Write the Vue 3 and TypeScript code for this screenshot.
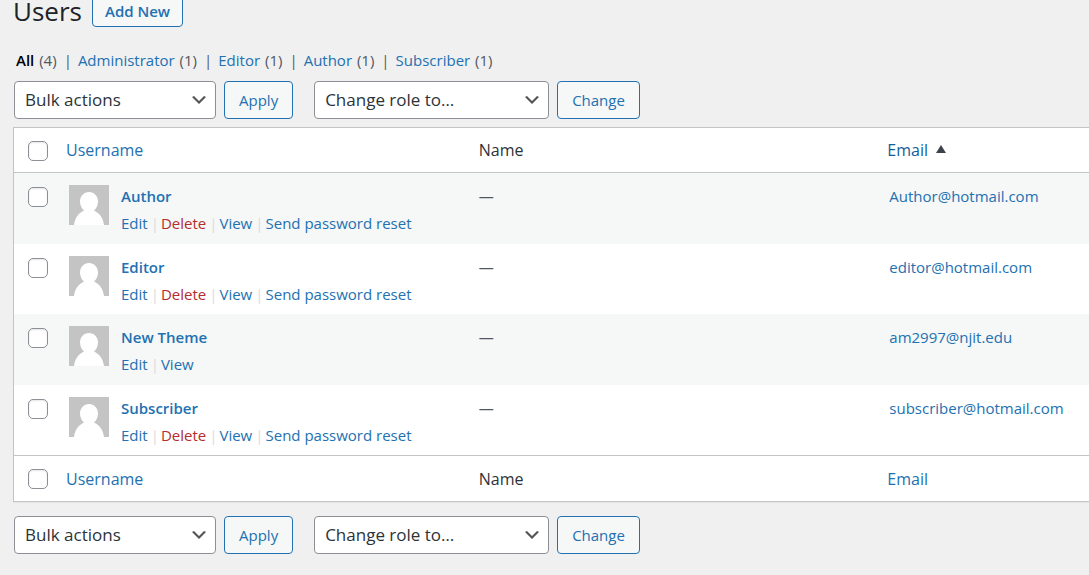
<script setup lang="ts">
import { ref } from 'vue'

interface User {
  id: number
  login: string
  email: string
  actions: string[]
}

const views = [
  { label: 'All', count: 4, current: true },
  { label: 'Administrator', count: 1, current: false },
  { label: 'Editor', count: 1, current: false },
  { label: 'Author', count: 1, current: false },
  { label: 'Subscriber', count: 1, current: false },
]

const allActions = ['Edit', 'Delete', 'View', 'Send password reset']

const users: User[] = [
  { id: 1, login: 'Author', email: 'Author@hotmail.com', actions: allActions },
  { id: 2, login: 'Editor', email: 'editor@hotmail.com', actions: allActions },
  { id: 3, login: 'New Theme', email: 'am2997@njit.edu', actions: ['Edit', 'View'] },
  { id: 4, login: 'Subscriber', email: 'subscriber@hotmail.com', actions: allActions },
]

const selected = ref<number[]>([])

function toggleAll(event: Event) {
  const box = event.target as HTMLInputElement
  selected.value = box.checked ? users.map((u) => u.id) : []
}
</script>

<template>
  <main class="page">
    <header class="heading">
      <h1>Users</h1>
      <button type="button" class="button add">Add New</button>
    </header>

    <ul class="views">
      <li v-for="view in views" :key="view.label">
        <a href="#" :class="{ current: view.current }">{{ view.label }} <span class="count">({{ view.count }})</span></a>
      </li>
    </ul>

    <template v-for="place in ['top', 'bottom']" :key="place">
      <form class="tablenav" :class="place" @submit.prevent>
        <div class="pick">
          <select class="bulk" aria-label="Select bulk action">
            <option>Bulk actions</option>
            <option>Delete</option>
          </select>
          <svg class="chevron" viewBox="0 0 20 20" aria-hidden="true"><path d="M5 6l5 5 5-5 2 1-7 7-7-7 2-1z" /></svg>
        </div>
        <button type="button" class="button apply">Apply</button>
        <div class="pick">
          <select class="role" aria-label="Change role to">
            <option>Change role to…</option>
            <option>Subscriber</option>
            <option>Author</option>
            <option>Editor</option>
            <option>Administrator</option>
          </select>
          <svg class="chevron" viewBox="0 0 20 20" aria-hidden="true"><path d="M5 6l5 5 5-5 2 1-7 7-7-7 2-1z" /></svg>
        </div>
        <button type="button" class="button">Change</button>
      </form>

      <table v-if="place === 'top'" class="users">
        <colgroup>
          <col class="col-check" />
          <col class="col-user" />
          <col class="col-name" />
          <col />
        </colgroup>
        <thead>
          <tr>
            <td class="check"><input type="checkbox" aria-label="Select all" @change="toggleAll" /></td>
            <th scope="col"><a href="#">Username</a></th>
            <th scope="col">Name</th>
            <th scope="col">
              <a href="#" class="sorted">Email<svg class="arrow" viewBox="0 0 10 8" aria-hidden="true"><path d="M5 0l5 8H0z" /></svg></a>
            </th>
          </tr>
        </thead>
        <tbody>
          <tr v-for="user in users" :key="user.id">
            <td class="check">
              <input v-model="selected" type="checkbox" :value="user.id" :aria-label="`Select ${user.login}`" />
            </td>
            <td>
              <div class="person">
                <svg class="avatar" viewBox="0 0 40 40" aria-hidden="true">
                  <rect width="40" height="40" fill="#c4c4c4" />
                  <path d="M5 40C6 32 10 28 15 25.500C12.500 23.500 11 20 11 16.500C11 11 15 7 20 7S29 11 29 16.500C29 20 27.500 23.500 25 25.500C30 28 34 32 35 40Z" fill="#fff" />
                </svg>
                <div>
                  <a href="#" class="login">{{ user.login }}</a>
                  <div class="actions">
                    <span v-for="action in user.actions" :key="action"><a href="#" :class="{ danger: action === 'Delete' }">{{ action }}</a></span>
                  </div>
                </div>
              </div>
            </td>
            <td class="name">—</td>
            <td class="email"><a href="#">{{ user.email }}</a></td>
          </tr>
        </tbody>
        <tfoot>
          <tr>
            <td class="check"><input type="checkbox" aria-label="Select all" @change="toggleAll" /></td>
            <th scope="col"><a href="#">Username</a></th>
            <th scope="col">Name</th>
            <th scope="col"><a href="#">Email</a></th>
          </tr>
        </tfoot>
      </table>
    </template>
  </main>
</template>

<style>
body {
  background: #f0f0f1;
  overflow: hidden;
}
</style>

<style scoped>
.page {
  box-sizing: border-box;
  padding-left: 13px;
  font: 15px/24px "Open Sans", "Noto Sans", sans-serif;
  color: #50575e;
}
.page * {
  box-sizing: border-box;
}
a {
  color: #2271b1;
  text-decoration: none;
}
.heading {
  display: flex;
  align-items: flex-end;
  gap: 10px;
  height: 37px;
  margin-top: -10px;
}
h1 {
  margin: 0;
  font-size: 26px;
  line-height: 32px;
  font-weight: 400;
  color: #1d2327;
}
.button {
  height: 38px;
  padding: 0 14px;
  border: 1px solid #2271b1;
  border-radius: 4px;
  background: #f6f7f7;
  color: #2271b1;
  font: inherit;
  cursor: pointer;
}
.button.add {
  height: 32px;
  padding: 0 12px;
  font-weight: 600;
}
.views {
  display: flex;
  margin: 21px 0 9px;
  padding: 0 0 0 3px;
  list-style: none;
}
.views li + li::before {
  content: "|";
  margin: 0 6px 0 7px;
}
.views .current {
  color: #000;
  font-weight: 600;
}
.count {
  margin-left: 1px;
  color: #50575e;
  font-weight: 400;
}
.tablenav {
  display: flex;
  gap: 8px;
  padding-left: 1px;
}
.tablenav.top {
  margin-bottom: 8px;
}
.tablenav.bottom {
  margin-top: 14px;
}
.pick {
  display: grid;
  align-items: center;
}
.pick > * {
  grid-area: 1 / 1;
}
select {
  height: 38px;
  padding: 0 30px 0 10px;
  border: 1px solid #8c8f94;
  border-radius: 4px;
  background: #fff;
  color: #2c3338;
  font: 17px/24px "Open Sans", "Noto Sans", sans-serif;
  appearance: none;
}
.bulk {
  width: 202px;
}
.role {
  width: 235px;
}
.apply {
  margin-right: 13px;
}
.chevron {
  justify-self: end;
  width: 20px;
  height: 20px;
  margin-right: 7px;
  fill: #555;
  pointer-events: none;
}
.users {
  width: 100%;
  table-layout: fixed;
  border-collapse: separate;
  border-spacing: 0;
  border: 1px solid #c3c4c7;
  border-right: 0;
  background: #fff;
  box-shadow: 0 1px 1px rgba(0, 0, 0, 0.04);
}
.col-check {
  width: 42px;
}
.col-user {
  width: 38.4%;
}
.col-name {
  width: 38%;
}
th,
td {
  padding: 0 10px;
  text-align: left;
  vertical-align: top;
}
th {
  height: 45px;
  vertical-align: middle;
  font-size: 16px;
  font-weight: 400;
  color: #2c3338;
}
thead th,
thead td {
  border-bottom: 1px solid #c3c4c7;
}
tfoot th,
tfoot td {
  border-top: 1px solid #c3c4c7;
}
tfoot th {
  height: 46px;
}
.check {
  padding: 13px 0 0 14px;
}
input[type="checkbox"] {
  display: block;
  width: 20px;
  height: 20px;
  margin: 0;
  border: 1px solid #8c8f94;
  border-radius: 5px;
  background: #fff;
  box-shadow: inset 0 1px 2px rgba(0, 0, 0, 0.1);
  appearance: none;
}
input[type="checkbox"]:checked {
  background: #2271b1;
}
.sorted {
  color: #135e96;
}
.arrow {
  width: 10px;
  height: 8px;
  margin: 0 0 3px 8px;
  fill: #3c434a;
}
tbody td {
  height: 71px;
  padding-top: 11px;
}
tbody tr:nth-child(even) td {
  height: 70px;
}
tbody td.check {
  padding-top: 14px;
}
tbody tr:nth-child(odd) {
  background: #f6f7f7;
}
tbody tr:nth-child(even) {
  background: #fff;
}
.person {
  display: flex;
  gap: 12px;
  padding-left: 3px;
}
.avatar {
  width: 40px;
  height: 40px;
  margin-top: 1px;
}
.login {
  font-weight: 600;
}
.actions {
  display: flex;
  margin-top: 3px;
}
.actions span + span::before {
  content: "|";
  margin: 0 2px 0 3px;
  color: #dcdcde;
}
.actions .danger {
  color: #b32d2e;
}
.email {
  padding-left: 12px;
}
</style>
